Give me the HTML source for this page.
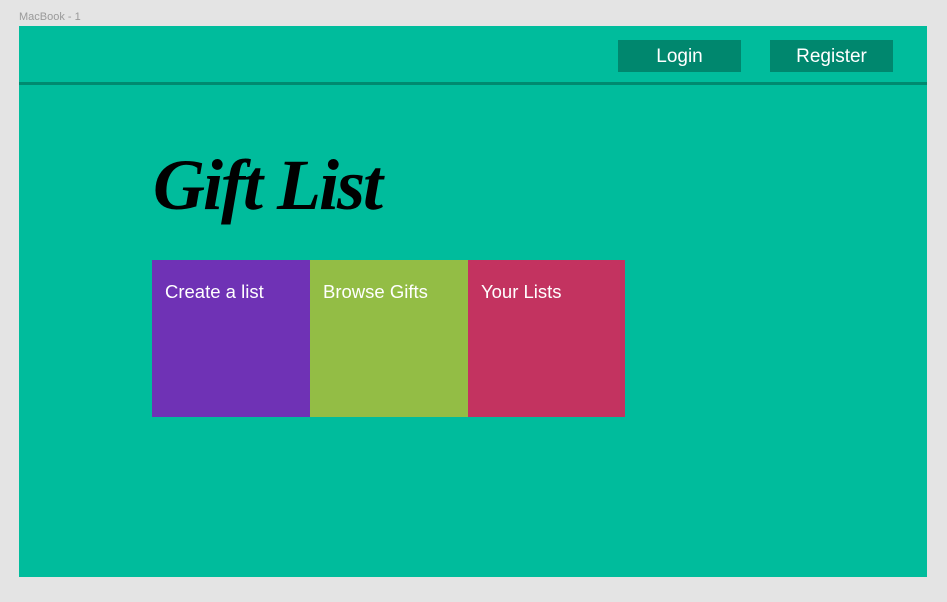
<!DOCTYPE html>
<html><head><style>
body{margin:0;width:947px;height:602px;background:#e4e4e4;position:relative;overflow:hidden;font-family:"Liberation Sans",sans-serif}
.lbl{position:absolute;left:19px;top:11px;font-size:11px;color:#9a9a9a}
.frame{position:absolute;left:19px;top:26px;width:908px;height:551px;background:#00bc9c}
.line{position:absolute;left:0;top:56px;width:908px;height:3px;background:#008a70}
.btn{position:absolute;top:14px;width:123px;height:32px;background:#00876e;color:#fff;font-size:19px;text-align:center;line-height:33px}
h1{position:absolute;left:134px;top:118px;margin:0;font-family:"Liberation Serif",serif;font-style:italic;font-weight:bold;font-size:72px;color:#000;letter-spacing:-2px}
.card{position:absolute;top:234px;height:157px;color:#fff;font-size:18.5px;box-sizing:border-box;padding:21px 13px}
</style></head><body>
<div class="lbl">MacBook - 1</div>
<div class="frame">
<div class="btn" style="left:599px">Login</div>
<div class="btn" style="left:751px">Register</div>
<div class="line"></div>
<h1>Gift List</h1>
<div class="card" style="left:133px;width:158px;background:#6f32b5">Create a list</div>
<div class="card" style="left:291px;width:158px;background:#93bd45">Browse Gifts</div>
<div class="card" style="left:449px;width:157px;background:#c33360">Your Lists</div>
</div>
</body></html>
